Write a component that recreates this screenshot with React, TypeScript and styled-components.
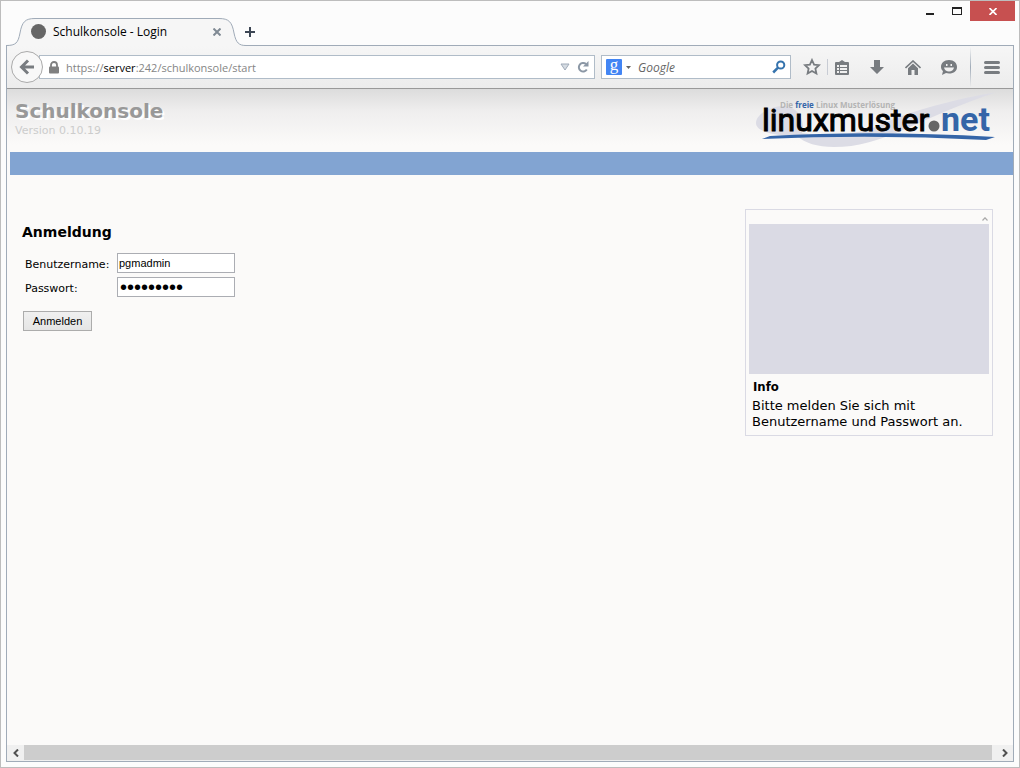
import React, { useState } from "react";
import styled, { createGlobalStyle, css } from "styled-components";

const ui = `"Open Sans", "Noto Sans", sans-serif`;
const verdana = `"DejaVu Sans", sans-serif`;
const tahoma = `"DejaVu Sans Condensed", "DejaVu Sans", sans-serif`;
const control = `"Liberation Sans", Arial, sans-serif`;
const line = "#a0abb8";
const iconGrey = "#787c80";

const GlobalStyle = createGlobalStyle`
  *, *::before, *::after { box-sizing: border-box; }
  body { margin: 0; background: #fcfcfc; }
  button, input { font: inherit; }
`;

const BrowserWindow = styled.div`
  display: flex;
  flex-direction: column;
  min-height: 100vh;
  padding: 0 5px 5px;
  border: 1px solid #bdbdbd;
  background: #fcfcfc;
`;

const TitleBar = styled.header`
  display: flex;
  justify-content: space-between;
  height: 44px;
  margin-right: -1px;
`;

const TabStrip = styled.div`
  display: flex;
  align-items: flex-end;
`;

const Tab = styled.div`
  position: relative;
  z-index: 1;
  display: flex;
  align-items: center;
  gap: 7px;
  width: 240px;
  height: 29px;
  margin-bottom: -1px;
  padding: 0 20px 0 25px;
`;

const TabShape = styled.svg`
  position: absolute;
  inset: 0;
  z-index: -1;
`;

const TabDot = styled.span`
  width: 15px;
  height: 15px;
  border-radius: 50%;
  background: #666;
`;

const TabTitle = styled.span`
  flex: 1;
  font: 12px/16px ${ui};
  color: #000;
`;

const PlainButton = styled.button`
  display: flex;
  align-items: center;
  justify-content: center;
  flex: none;
  padding: 0;
  border: 0;
  background: none;
  color: ${iconGrey};
`;

const TabClose = styled(PlainButton)`
  width: 18px;
  height: 18px;
  color: #808a94;
`;

const NewTab = styled(PlainButton)`
  width: 16px;
  height: 26px;
  margin-left: -4px;
  color: #3c4654;
`;

const WindowControls = styled.div`
  display: flex;
  align-items: flex-start;
`;

const WindowButton = styled(PlainButton)<{ $close?: boolean }>`
  width: 27px;
  height: 20px;
  color: #222;
  ${(p) =>
    p.$close &&
    css`
      width: 45px;
      background: #c75050;
      color: #fff;
    `}
`;

const Frame = styled.div`
  display: flex;
  flex: 1;
  flex-direction: column;
  border: 1px solid ${line};
`;

const Toolbar = styled.nav`
  display: flex;
  align-items: center;
  height: 43px;
  padding: 0 3px 0 4px;
  border-bottom: 1px solid #999;
  background: linear-gradient(#f6f6f6, #ececec);
`;

const BackButton = styled(PlainButton)`
  position: relative;
  z-index: 1;
  width: 32px;
  height: 32px;
  margin-right: -4px;
  border: 1px solid #aaa;
  border-radius: 50%;
  background: #f8f8f8;
`;

const FieldBox = styled.div`
  display: flex;
  align-items: center;
  height: 24px;
  border: 1px solid #b0bcc8;
  background: #fff;
`;

const AddressBox = styled(FieldBox)`
  flex: 1;
  gap: 7px;
  padding: 0 5px 0 9px;
`;

const Address = styled.span`
  flex: 1;
  padding-top: 1px;
  font: 11px/16px ${ui};
  color: #858585;
`;

const Host = styled.span`
  color: #000;
`;

const SearchBox = styled(FieldBox)`
  width: 190px;
  margin-left: 6px;
  padding: 0 4px;
`;

const EngineButton = styled(PlainButton)`
  gap: 4px;
`;

const EngineMark = styled.span`
  width: 16px;
  height: 16px;
  border-radius: 1px;
  background: #4285f4;
  color: #fff;
  font: 17px/12px "Liberation Serif", serif;
`;

const SearchInput = styled.input`
  flex: 1;
  min-width: 0;
  margin-left: 7px;
  padding: 1px 0 0;
  border: 0;
  outline: 0;
  background: none;
  font: italic 12px/16px ${ui};
  &::placeholder { color: #666; opacity: 1; }
`;

const Tools = styled.div`
  display: flex;
  align-items: center;
  align-self: stretch;
  margin-left: 12px;
`;

const ToolButton = styled(PlainButton)<{ $wide?: boolean }>`
  width: ${(p) => (p.$wide ? 36 : 18)}px;
  height: 32px;
`;

const BookmarkTools = styled.div`
  display: flex;
  align-items: center;
  margin-right: 8px;
`;

const Divider = styled.span<{ $tall?: boolean }>`
  width: 1px;
  height: ${(p) => (p.$tall ? "40px" : "16px")};
  margin: ${(p) => (p.$tall ? "0 3px 0 3px" : "0 5px 0 6px")};
  background: ${(p) =>
    p.$tall ? `linear-gradient(#f6f6f6, ${line}, #ececec)` : "#c8ccd4"};
`;

const Page = styled.main`
  display: flex;
  flex: 1;
  flex-direction: column;
  background: linear-gradient(#dcdcdc, #efeeee 22px, #fbfaf9 56px);
  font-family: ${verdana};
  color: #000;
`;

const Banner = styled.div`
  display: flex;
  justify-content: space-between;
  height: 63px;
  padding: 0 17px 0 8px;
`;

const Brand = styled.div`
  padding-top: 10px;
`;

const Product = styled.h1`
  margin: 0;
  font-size: 20px;
  line-height: 24px;
  color: #999;
  text-shadow: 2px 2px 0 #fff;
`;

const Version = styled.p`
  margin: 0;
  font-size: 11px;
  line-height: 16px;
  color: #ccc;
`;

const MenuBar = styled.div`
  height: 23px;
  margin-left: 3px;
  background: #82a4d2;
`;

const Columns = styled.div`
  display: flex;
  align-items: flex-start;
  justify-content: space-between;
  padding: 34px 20px 34px 15px;
`;

const LoginForm = styled.form`
  padding-top: 13px;
`;

const Heading = styled.h2`
  margin: 0 0 11px;
  font-size: 14px;
  line-height: 20px;
`;

const FormRow = styled.div`
  display: flex;
  height: 20px;
  margin: 0 0 4px 3px;
  font-size: 11px;
  line-height: 24px;
`;

const Label = styled.label`
  width: 92px;
`;

const TextInput = styled.input`
  width: 118px;
  height: 20px;
  padding: 0 1px;
  border: 1px solid #abadb3;
  background: #fff;
  font: 11px/16px ${control};
  color: #000;
  &[type="password"] { padding-left: 2px; font-size: 20px; }
`;

const SubmitButton = styled.button`
  width: 69px;
  height: 20px;
  margin: 10px 0 0 1px;
  padding: 0;
  border: 1px solid #acacac;
  background: linear-gradient(#f0f0f0, #e5e5e5);
  font: 11px/16px ${control};
  color: #000;
`;

const InfoPanel = styled.aside`
  display: flex;
  flex-direction: column;
  width: 248px;
  padding: 0 3px 5px;
  border: 1px solid #dadae4;
`;

const Collapse = styled(PlainButton)`
  align-self: flex-end;
  width: 8px;
  height: 14px;
  padding-top: 3px;
  color: #aaa;
`;

const InfoImage = styled.div`
  height: 150px;
  background: #dadae4;
`;

const InfoTitle = styled.h3`
  margin: 4px 4px 2px;
  font: bold 13px/18px ${tahoma};
`;

const InfoText = styled.p`
  margin: 0 3px;
  font-size: 13px;
  line-height: 16px;
`;

const ScrollBar = styled.div`
  display: flex;
  height: 16px;
  background: #f0f0f0;
`;

const ScrollButton = styled(PlainButton)<{ $end?: boolean }>`
  width: ${(p) => (p.$end ? 21 : 17)}px;
  padding-left: ${(p) => (p.$end ? 4 : 0)}px;
  color: #505050;
`;

const ScrollThumb = styled.div`
  flex: 1;
  height: 15px;
  background: #cdcdcd;
`;

function Logo() {
  return (
    <svg width="240" height="63" viewBox="756 89 240 63" role="img" aria-label="linuxmuster.net">
      <path
        d="M782 106C768 107 756 115 756 123C756 131 772 136 797 136C805 143 817 147 834 147C858 147 877 141 905 129C930 118 964 103 997 92C961 98 910 110 878 126C852 137 821 136 802 133C806 120 797 105 782 106Z"
        fill="#dcdce5"
      />
      <path d="M762 139L770 136Q875 130 995 137L986 140Q875 134 762 139Z" fill="#3465a8" />
      <text x="780" y="108" fontFamily="Open Sans" fontWeight="bold" fontSize="8" fill="#b4b4b4">
        Die <tspan fill="#3465a8">freie</tspan> Linux Musterlösung
      </text>
      <text x="762" y="131" fontFamily="Roboto" fontSize="32" fill="#000" stroke="#000">
        linuxmuster
      </text>
      <circle cx="934" cy="126" r="5.500" fill="#666" />
      <text x="941" y="131" fontFamily="Roboto" fontWeight="bold" fontSize="34" fill="#3465a8">
        net
      </text>
    </svg>
  );
}

export default function App() {
  const [user, setUser] = useState("pgmadmin");
  const [password, setPassword] = useState("muster123");

  return (
    <BrowserWindow>
      <GlobalStyle />
      <TitleBar>
        <TabStrip>
          <Tab>
            <TabShape width="240" height="29" viewBox="0 0 240 29" aria-hidden="true">
              <path
                d="M0 28.5C10 28.500 12 26 14 16C16 5 19 1.500 29 1.500H213C223 1.500 226 5 228 16C230 26 233 28.500 240 28.500V29H0Z"
                fill="#f6f6f6"
              />
              <path
                d="M0 28.500C10 28.500 12 26 14 16C16 5 19 1.500 29 1.500H213C223 1.500 226 5 228 16C230 26 233 28.500 240 28.500"
                fill="none"
                stroke={line}
              />
            </TabShape>
            <TabDot />
            <TabTitle>Schulkonsole - Login</TabTitle>
            <TabClose aria-label="Tab schließen">
              <svg width="8" height="8" viewBox="0 0 8 8" stroke="currentColor" strokeWidth="2">
                <path d="M.5 .5L7.500 7.500M7.500 .5L.5 7.500" />
              </svg>
            </TabClose>
          </Tab>
          <NewTab aria-label="Neuer Tab">
            <svg width="10" height="10" viewBox="0 0 10 10" stroke="currentColor" strokeWidth="2">
              <path d="M5 0V10M0 5H10" />
            </svg>
          </NewTab>
        </TabStrip>
        <WindowControls>
          <WindowButton aria-label="Minimieren">
            <svg width="10" height="10" viewBox="0 0 10 10">
              <path d="M1 7H9V9H1Z" fill="currentColor" />
            </svg>
          </WindowButton>
          <WindowButton aria-label="Maximieren">
            <svg width="10" height="8" viewBox="0 0 10 8">
              <path d="M0 0H10V8H0ZM1 2V7H9V2Z" fill="currentColor" fillRule="evenodd" />
            </svg>
          </WindowButton>
          <WindowButton $close aria-label="Schließen">
            <svg width="8" height="7" viewBox="0 0 8 7" stroke="currentColor" strokeWidth="1.600">
              <path d="M.5 0L7.500 7M7.500 0L.5 7" />
            </svg>
          </WindowButton>
        </WindowControls>
      </TitleBar>

      <Frame>
        <Toolbar>
          <BackButton aria-label="Zurück">
            <svg width="16" height="16" viewBox="0 0 16 16" fill="none" stroke="currentColor" strokeWidth="3">
              <path d="M9 1.500L2.500 8L9 14.500M3 8H15" />
            </svg>
          </BackButton>
          <AddressBox>
            <svg width="10" height="13" viewBox="0 0 10 13">
              <path d="M2 6V4A3 3 0 0 1 8 4V6" fill="none" stroke="#808080" strokeWidth="1.800" />
              <rect y="5.500" width="10" height="7" rx="1" fill="#808080" />
            </svg>
            <Address>
              https://<Host>server</Host>:242/schulkonsole/start
            </Address>
            <PlainButton aria-label="Verlauf">
              <svg width="10" height="8" viewBox="0 0 10 8">
                <path d="M1 1H9L5 7Z" fill="#d5dbe2" stroke="#a0abb8" />
              </svg>
            </PlainButton>
            <PlainButton aria-label="Neu laden">
              <svg width="12" height="12" viewBox="0 0 12 12">
                <path d="M9 3A4.300 4.300 0 1 0 9.800 8.500" fill="none" stroke="#8b97a5" strokeWidth="2" />
                <path d="M11.500 0V5.500H6Z" fill="#8b97a5" />
              </svg>
            </PlainButton>
          </AddressBox>
          <SearchBox>
            <EngineButton aria-label="Suchmaschine wählen">
              <EngineMark>g</EngineMark>
              <svg width="5" height="3" viewBox="0 0 5 3">
                <path d="M0 0H5L2.500 3Z" fill="#666" />
              </svg>
            </EngineButton>
            <SearchInput placeholder="Google" aria-label="Suche" />
            <PlainButton aria-label="Suchen">
              <svg width="14" height="14" viewBox="0 0 14 14" fill="none" stroke="#3573ad">
                <circle cx="8.700" cy="5" r="3.600" strokeWidth="2" />
                <path d="M6 7.700L1.200 12.500" strokeWidth="2.500" />
              </svg>
            </PlainButton>
          </SearchBox>
          <Tools>
            <BookmarkTools>
              <ToolButton aria-label="Lesezeichen">
                <svg width="18" height="18" viewBox="0 0 18 18" fill="none" stroke="currentColor" strokeWidth="1.800">
                  <path d="M9 2L11.100 6.600L16 7.200L12.400 10.600L13.400 15.500L9 13L4.600 15.500L5.600 10.600L2 7.200L6.900 6.600Z" />
                </svg>
              </ToolButton>
              <Divider />
              <ToolButton aria-label="Lesezeichen anzeigen">
                <svg width="14" height="15" viewBox="0 0 14 15">
                  <path
                    d="M1 2H4L7 0L10 2H13Q14 2 14 3V14Q14 15 13 15H1Q0 15 0 14V3Q0 2 1 2ZM2 5V7H4V5ZM5 5V7H12V5ZM2 8V10H4V8ZM5 8V10H12V8ZM2 11V13H4V11ZM5 11V13H12V11Z"
                    fill="currentColor"
                    fillRule="evenodd"
                  />
                </svg>
              </ToolButton>
            </BookmarkTools>
            <ToolButton $wide aria-label="Downloads">
              <svg width="14" height="14" viewBox="0 0 14 14">
                <path d="M4 0H10V7H14L7 14L0 7H4Z" fill="currentColor" />
              </svg>
            </ToolButton>
            <ToolButton $wide aria-label="Startseite">
              <svg width="16" height="15" viewBox="0 0 16 15">
                <path d="M.5 8L8 1L15.500 8" fill="none" stroke="currentColor" strokeWidth="1.600" />
                <path d="M8 3.500L13 8.200V15H9.500V10H6.500V15H3V8.200Z" fill="currentColor" />
              </svg>
            </ToolButton>
            <ToolButton $wide aria-label="Chat">
              <svg width="16" height="15" viewBox="0 0 16 15">
                <path d="M8 0C13 0 16 3 16 7C16 11 13 13.500 8 13.500L5 13L1 15L2 11C.7 10 0 8.500 0 7C0 3 3 0 8 0Z" fill="currentColor" />
                <path d="M3 7.500H13C12.500 10 10.500 11.500 8 11.500S3.500 10 3 7.500ZM5 4H6.500V6H5ZM9.500 4H11V6H9.500Z" fill="#f1f1f1" />
              </svg>
            </ToolButton>
            <Divider $tall />
            <ToolButton $wide aria-label="Menü">
              <svg width="16" height="13" viewBox="0 0 16 13" stroke="currentColor" strokeWidth="3" strokeLinecap="round">
                <path d="M1.500 1.500H14.500M1.500 6.500H14.500M1.500 11.500H14.500" />
              </svg>
            </ToolButton>
          </Tools>
        </Toolbar>

        <Page>
          <Banner>
            <Brand>
              <Product>Schulkonsole</Product>
              <Version>Version 0.10.19</Version>
            </Brand>
            <Logo />
          </Banner>
          <MenuBar />
          <Columns>
            <LoginForm onSubmit={(e) => e.preventDefault()}>
              <Heading>Anmeldung</Heading>
              <FormRow>
                <Label htmlFor="user">Benutzername:</Label>
                <TextInput id="user" value={user} onChange={(e) => setUser(e.target.value)} />
              </FormRow>
              <FormRow>
                <Label htmlFor="password">Passwort:</Label>
                <TextInput
                  id="password"
                  type="password"
                  value={password}
                  onChange={(e) => setPassword(e.target.value)}
                />
              </FormRow>
              <SubmitButton type="submit">Anmelden</SubmitButton>
            </LoginForm>
            <InfoPanel>
              <Collapse aria-label="Einklappen">
                <svg width="6" height="4" viewBox="0 0 6 4" fill="none" stroke="currentColor" strokeWidth="1.200">
                  <path d="M.5 3.500L3 .8L5.500 3.500" />
                </svg>
              </Collapse>
              <InfoImage />
              <InfoTitle>Info</InfoTitle>
              <InfoText>Bitte melden Sie sich mit Benutzername und Passwort an.</InfoText>
            </InfoPanel>
          </Columns>
        </Page>

        <ScrollBar>
          <ScrollButton aria-label="Nach links">
            <svg width="6" height="8" viewBox="0 0 6 8" fill="none" stroke="currentColor" strokeWidth="2">
              <path d="M5 .5L1.500 4L5 7.500" />
            </svg>
          </ScrollButton>
          <ScrollThumb />
          <ScrollButton $end aria-label="Nach rechts">
            <svg width="6" height="8" viewBox="0 0 6 8" fill="none" stroke="currentColor" strokeWidth="2">
              <path d="M1 .5L4.500 4L1 7.500" />
            </svg>
          </ScrollButton>
        </ScrollBar>
      </Frame>
    </BrowserWindow>
  );
}
